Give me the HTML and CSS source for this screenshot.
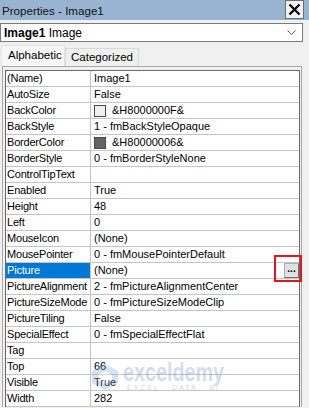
FILE: index.html
```html
<!DOCTYPE html>
<html lang="en">
<head>
  <meta charset="UTF-8">
  <title>Properties - Image1</title>
  <link rel="stylesheet" href="styles.css">
</head>
<body>
  <div class="window">
    <div class="titlebar">
      <span class="title">Properties - Image1</span>
      <div class="close">
        <svg width="13" height="13" viewBox="0 0 13 13"><path d="M1.5 1.5 L11.5 11.5 M11.5 1.5 L1.5 11.5" stroke="#000" stroke-width="2.2" fill="none"/></svg>
      </div>
    </div>
    <div class="combo">
      <span><b>Image1</b> Image</span>
      <svg class="chevron" width="9" height="6" viewBox="0 0 9 6"><path d="M0.5 0.5 L4.5 4.5 L8.5 0.5" stroke="#606060" fill="none"/></svg>
    </div>
    <div class="tabs">
      <div class="tab active">Alphabetic</div>
      <div class="tab">Categorized</div>
    </div>
    <div class="frame">
      <div class="grid">
        <div class="row"><div class="name">(Name)</div><div class="value">Image1</div></div>
        <div class="row"><div class="name">AutoSize</div><div class="value">False</div></div>
        <div class="row"><div class="name">BackColor</div><div class="value"><span class="swatch"></span>&amp;H8000000F&amp;</div></div>
        <div class="row"><div class="name">BackStyle</div><div class="value">1 - fmBackStyleOpaque</div></div>
        <div class="row"><div class="name">BorderColor</div><div class="value"><span class="swatch dark"></span>&amp;H80000006&amp;</div></div>
        <div class="row"><div class="name">BorderStyle</div><div class="value">0 - fmBorderStyleNone</div></div>
        <div class="row"><div class="name">ControlTipText</div><div class="value"></div></div>
        <div class="row"><div class="name">Enabled</div><div class="value">True</div></div>
        <div class="row"><div class="name">Height</div><div class="value">48</div></div>
        <div class="row"><div class="name">Left</div><div class="value">0</div></div>
        <div class="row"><div class="name">MouseIcon</div><div class="value">(None)</div></div>
        <div class="row"><div class="name">MousePointer</div><div class="value">0 - fmMousePointerDefault</div></div>
        <div class="row picked">
          <div class="name">Picture</div>
          <div class="value">(None)<span class="dots">...</span></div>
          <div class="mark"></div>
        </div>
        <div class="row"><div class="name">PictureAlignment</div><div class="value">2 - fmPictureAlignmentCenter</div></div>
        <div class="row"><div class="name">PictureSizeMode</div><div class="value">0 - fmPictureSizeModeClip</div></div>
        <div class="row"><div class="name">PictureTiling</div><div class="value">False</div></div>
        <div class="row"><div class="name">SpecialEffect</div><div class="value">0 - fmSpecialEffectFlat</div></div>
        <div class="row"><div class="name">Tag</div><div class="value"></div></div>
        <div class="row"><div class="name">Top</div><div class="value">66</div></div>
        <div class="row"><div class="name">Visible</div><div class="value">True</div></div>
        <div class="row"><div class="name">Width</div><div class="value">282</div></div>
      </div>
    </div>
    <div class="watermark">
      <svg class="wm-logo" width="30" height="28" viewBox="0 0 30 28"><path d="M15 1 L28 8 L28 20 L15 27 L2 20 L2 8 Z" fill="#7f9fd6"/><path d="M15 8 L22 12 L22 17 L15 21 L8 17 L8 12 Z" fill="#fff"/></svg>
      <div class="wm-text">
        <span class="wm-word">exceldemy</span>
        <span class="wm-sub">EXCEL · DATA · BI</span>
      </div>
    </div>
  </div>
</body>
</html>
```

FILE: styles.css
```css
body {
  margin: 0;
  background: #f0f0f0;
  font-family: "Liberation Sans", Arial, sans-serif;
  font-size: 11px;
  color: #000;
}
.window {
  position: relative;
  width: 309px;
  height: 408px;
  overflow: hidden;
}
.titlebar {
  height: 20px;
  background: #99b4d1;
  display: flex;
  align-items: center;
  justify-content: space-between;
  padding: 0 5px 0 2px;
}
.title {
  font-size: 11.6px;
  color: #111;
}
.close {
  width: 19px;
  height: 19px;
  box-sizing: border-box;
  margin-top: -1px;
  border: 1px solid #6e6e6e;
  background: #f2f2f2;
  display: flex;
  align-items: center;
  justify-content: center;
}
.combo {
  margin-top: 3px;
  width: 303px;
  height: 19px;
  box-sizing: border-box;
  border: 1px solid #7a7a7a;
  background: #fff;
  display: flex;
  align-items: center;
  justify-content: space-between;
  padding: 0 6px 0 3px;
  font-size: 12px;
}
.combo b {
  font-weight: bold;
}
.tabs {
  margin-top: 3px;
  height: 21px;
  display: flex;
  align-items: flex-end;
  padding-left: 1px;
}
.tab {
  box-sizing: border-box;
  height: 18px;
  padding: 0 5px;
  border: 1px solid #d9d9d9;
  border-bottom: none;
  font-size: 11.5px;
  line-height: 17px;
  background: #f0f0f0;
}
.tab.active {
  height: 21px;
  width: 64px;
  padding-left: 6px;
  line-height: 19px;
  background: #f7f7f7;
  border-color: #e3e3e3;
}
.frame {
  margin-left: 2px;
  width: 300px;
  box-sizing: border-box;
  border: 1px solid #a9a9a9;
  border-bottom: none;
  padding: 3px 1px 0 2px;
  background: #f0f0f0;
}
.grid {
  border: 1px solid #696969;
  border-bottom: none;
  background: #fff;
}
.row {
  position: relative;
  display: flex;
  height: 16px;
  box-sizing: border-box;
  border-bottom: 1px solid #c4c4c4;
}
.name {
  width: 83px;
  padding-left: 1px;
  border-right: 1px solid #c4c4c4;
  line-height: 15px;
  letter-spacing: -0.2px;
  white-space: nowrap;
  overflow: hidden;
}
.value {
  flex: 1;
  display: flex;
  align-items: center;
  padding-left: 3px;
  line-height: 15px;
  white-space: nowrap;
}
.swatch {
  width: 10px;
  height: 10px;
  border: 1px solid #4a4a4a;
  background: #f0f0f0;
  margin-right: 6px;
}
.swatch.dark {
  background: #646464;
}
.picked .name {
  background: #0078d7;
  color: #fff;
}
.dots {
  margin-left: auto;
  width: 15px;
  height: 15px;
  box-sizing: border-box;
  border: 1px solid #adadad;
  border-right-color: #6f6f6f;
  border-bottom-color: #6f6f6f;
  background: #e1e1e1;
  font-size: 10px;
  font-weight: bold;
  line-height: 10px;
  text-align: center;
}
.mark {
  position: absolute;
  left: 268px;
  top: -8px;
  width: 28px;
  height: 27px;
  box-sizing: border-box;
  border: 2px solid #e8141a;
}
.watermark {
  position: absolute;
  left: 90px;
  top: 360px;
  display: flex;
  align-items: flex-start;
  gap: 3px;
  opacity: 0.3;
  pointer-events: none;
}
.wm-logo {
  margin-top: 3px;
}
.wm-text {
  display: flex;
  flex-direction: column;
}
.wm-word {
  font-size: 25px;
  font-weight: bold;
  color: #6f8fcf;
  line-height: 24px;
  transform: scaleX(0.79);
  transform-origin: left;
}
.wm-sub {
  font-size: 7px;
  letter-spacing: 2px;
  color: #808080;
  margin-left: 4px;
}
```
